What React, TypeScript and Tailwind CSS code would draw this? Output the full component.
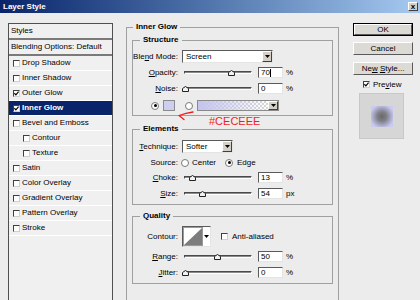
import React from "react";

function Check() {
  return (
    <svg width="5" height="5" viewBox="0 0 5 5">
      <path d="M0.4 2.2 L1.9 3.8 L4.6 0.6" stroke="#000" strokeWidth="1.2" fill="none" />
    </svg>
  );
}

function Checkbox({ checked }: { checked?: boolean }) {
  return (
    <span className="flex items-center justify-center w-[7px] h-[7px] shrink-0 bg-white border border-t-[#404040] border-l-[#404040] border-r-[#d0d0d0] border-b-[#d0d0d0]">
      {checked && <Check />}
    </span>
  );
}

function Radio({ on }: { on?: boolean }) {
  return (
    <span className="flex items-center justify-center w-[8px] h-[8px] shrink-0 rounded-full bg-white border border-[#7a7a7a]">
      {on && <span className="w-[3px] h-[3px] rounded-full bg-black" />}
    </span>
  );
}

function DropBtn() {
  return (
    <span className="flex items-center justify-center w-[10px] h-full shrink-0 bg-[#d4d0c8] border border-t-white border-l-white border-r-[#404040] border-b-[#404040]">
      <svg width="5" height="3" viewBox="0 0 5 3">
        <path d="M0 0 H5 L2.5 3 Z" fill="#000" />
      </svg>
    </span>
  );
}

function Select({ value, className }: { value: string; className: string }) {
  return (
    <div className={`h-[13px] flex items-stretch bg-white border border-t-[#5a5a5a] border-l-[#5a5a5a] border-r-[#e4e4e4] border-b-[#e4e4e4] ${className}`}>
      <span className="flex-1 flex items-center pl-[3px]">{value}</span>
      <DropBtn />
    </div>
  );
}

function Slider({ at }: { at: number }) {
  return (
    <div className="relative w-[72px] h-[11px] flex items-center px-[2px]">
      <div className="w-full h-[3px] bg-[#8a8a8a] border-t border-l border-t-[#4a4a4a] border-l-[#4a4a4a] border-b border-r border-b-white border-r-white" />
      <svg className="absolute top-[3px]" style={{ left: at }} width="7" height="6" viewBox="0 0 7 6">
        <path d="M0.5 5.5 V2.5 L3.5 0.5 L6.5 2.5 V5.5 Z" fill="#f2f2f2" stroke="#222" />
      </svg>
    </div>
  );
}

function Num({ v, caret }: { v: string; caret?: boolean }) {
  return (
    <div className="w-[25px] h-[11px] flex items-center pl-[2px] bg-white border border-t-[#5a5a5a] border-l-[#5a5a5a] border-r-[#e4e4e4] border-b-[#e4e4e4]">
      {v}
      {caret && <span className="w-px h-[8px] bg-black" />}
    </div>
  );
}

function Label({ children }: { children: React.ReactNode }) {
  return <span className="w-[45px] text-right shrink-0">{children}</span>;
}

function SliderRow({ label, at, v, unit, caret, className }: { label: React.ReactNode; at: number; v: string; unit: string; caret?: boolean; className: string }) {
  return (
    <div className={`h-[11px] flex items-center ${className}`}>
      <Label>{label}</Label>
      <span className="ml-[4px]">
        <Slider at={at} />
      </span>
      <span className="ml-[4px]">
        <Num v={v} caret={caret} />
      </span>
      <span className="ml-[3px]">{unit}</span>
    </div>
  );
}

const styles = [
  { label: "Drop Shadow" },
  { label: "Inner Shadow" },
  { label: "Outer Glow", checked: true },
  { label: "Inner Glow", checked: true, selected: true },
  { label: "Bevel and Emboss" },
  { label: "Contour", indent: true },
  { label: "Texture", indent: true },
  { label: "Satin" },
  { label: "Color Overlay" },
  { label: "Gradient Overlay" },
  { label: "Pattern Overlay" },
  { label: "Stroke" },
];

function Button({ children, primary, className }: { children: React.ReactNode; primary?: boolean; className?: string }) {
  return (
    <div className={`h-[13px] ${primary ? "border border-black" : ""} ${className ?? ""}`}>
      <div className="h-full flex items-center justify-center bg-[#dcdad4] border border-t-white border-l-white border-r-[#5a5a5a] border-b-[#5a5a5a]">
        {children}
      </div>
    </div>
  );
}

export default function App() {
  return (
    <div className="relative w-[420px] h-[300px] overflow-hidden bg-[#ececec] text-black text-[8px] leading-[10px] font-['Liberation_Sans',Arial,sans-serif]">
      {/* title bar */}
      <div className="h-[13px] flex items-center justify-between pl-[3px] pr-[2px] bg-linear-to-r from-[#0a246a] to-[#a6caf0]">
        <span className="text-white font-bold">Layer Style</span>
        <span className="w-[10px] h-[9px] flex items-center justify-center bg-[#d4d0c8] border border-t-white border-l-white border-r-[#404040] border-b-[#404040] font-bold leading-none">
          x
        </span>
      </div>

      <div className="flex pl-[8px]">
        {/* styles list */}
        <div className="mt-[10px] w-[105px] h-[290px] shrink-0 bg-[#f0f0f0] border border-[#505050]">
          <div className="h-[16px] flex items-center pl-[2px] border-b-2 border-[#7a7a7a]">Styles</div>
          <div className="h-[16px] flex items-center pl-[2px] border-b-2 border-[#7a7a7a]">Blending Options: Default</div>
          {styles.map((s) => (
            <div
              key={s.label}
              className={`h-[15px] flex items-center gap-[2px] border-b border-white ${s.indent ? "pl-[14px]" : "pl-[4px]"} ${s.selected ? "bg-[#0a246a] text-white font-bold" : ""}`}
            >
              <Checkbox checked={s.checked} />
              <span>{s.label}</span>
            </div>
          ))}
        </div>

        {/* main settings */}
        <fieldset className="ml-[13px] mt-[9px] w-[213px] shrink-0 border border-[#a0a0a0] px-[5px] pt-[3px] pb-[40px]">
          <legend className="ml-[1px] px-[3px] font-bold leading-[10px]">Inner Glow</legend>

          <fieldset className="border border-[#a0a0a0] pt-[5px] pb-[4px]">
            <legend className="ml-[7px] px-[3px] font-bold leading-[10px]">Structure</legend>
            <div className="h-[13px] flex items-center">
              <Label>
                Ble<u>n</u>d Mode:
              </Label>
              <Select value="Screen" className="ml-[4px] w-[91px]" />
            </div>
            <SliderRow className="mt-[4px]" label={<><u>O</u>pacity:</>} at={46} v="70" caret unit="%" />
            <SliderRow className="mt-[5px]" label={<><u>N</u>oise:</>} at={0} v="0" unit="%" />
            <div className="mt-[6px] h-[11px] flex items-center">
              <span className="ml-[18px]">
                <Radio on />
              </span>
              <span className="ml-[4px] w-[12px] h-[11px] bg-[#cecef0] border border-[#8a8a8a]" />
              <span className="ml-[10px]">
                <Radio />
              </span>
              <div className="ml-[4px] w-[82px] h-[11px] flex items-stretch border border-[#8a8a8a] bg-white bg-[repeating-conic-gradient(#d6d6d6_0_25%,#ffffff_0_50%)] bg-[length:4px_4px]">
                <span className="flex-1 bg-linear-to-r from-[#c4c4ee] to-transparent" />
                <DropBtn />
              </div>
            </div>
          </fieldset>

          <fieldset className="mt-[8px] border border-[#a0a0a0] pt-[6px] pb-[5px]">
            <legend className="ml-[7px] px-[3px] font-bold leading-[10px]">Elements</legend>
            <div className="h-[13px] flex items-center">
              <Label>
                <u>T</u>echnique:
              </Label>
              <Select value="Softer" className="ml-[4px] w-[51px]" />
            </div>
            <div className="mt-[4px] h-[11px] flex items-center">
              <Label>Source:</Label>
              <span className="ml-[3px]">
                <Radio />
              </span>
              <span className="ml-[3px]">Center</span>
              <span className="ml-[9px]">
                <Radio on />
              </span>
              <span className="ml-[4px]">Edge</span>
            </div>
            <SliderRow className="mt-[4px]" label={<><u>C</u>hoke:</>} at={7} v="13" unit="%" />
            <SliderRow className="mt-[5px]" label={<><u>S</u>ize:</>} at={17} v="54" unit="px" />
          </fieldset>

          <fieldset className="mt-[6px] border border-[#a0a0a0] pt-[5px] pb-[5px]">
            <legend className="ml-[7px] px-[3px] font-bold leading-[10px]">Quality</legend>
            <div className="h-[21px] flex items-center">
              <Label>Contour:</Label>
              <div className="ml-[4px] w-[29px] h-[21px] flex items-stretch bg-white border border-t-[#5a5a5a] border-l-[#5a5a5a] border-r-[#e4e4e4] border-b-[#e4e4e4]">
                <svg width="20" height="19" viewBox="0 0 20 19" className="shrink-0">
                  <rect x="0.5" y="0.5" width="19" height="18" fill="#fff" stroke="#9a9a9a" />
                  <path d="M1 18 L19 1 L19 18 Z" fill="#7c7c7c" />
                </svg>
                <span className="flex-1 flex items-center justify-center">
                  <svg width="5" height="3" viewBox="0 0 5 3">
                    <path d="M0 0 H5 L2.5 3 Z" fill="#000" />
                  </svg>
                </span>
              </div>
              <span className="ml-[10px]">
                <Checkbox />
              </span>
              <span className="ml-[4px]">Anti-aliased</span>
            </div>
            <SliderRow className="mt-[4px]" label={<><u>R</u>ange:</>} at={32} v="50" unit="%" />
            <SliderRow className="mt-[5px]" label={<><u>J</u>itter:</>} at={0} v="0" unit="%" />
          </fieldset>
        </fieldset>

        {/* buttons */}
        <div className="ml-[14px] mt-[10px] w-[60px] flex flex-col">
          <Button primary>OK</Button>
          <Button className="mt-[6px]">Cancel</Button>
          <Button className="mt-[7px]">
            Ne<u>w</u>&nbsp;<u>S</u>tyle...
          </Button>
          <div className="mt-[5px] h-[9px] flex items-center pl-[10px] gap-[3px]">
            <Checkbox checked />
            <span>
              Pre<u>v</u>iew
            </span>
          </div>
          <div className="mt-[4px] ml-[6px] w-[45px] h-[46px] flex items-center justify-center bg-[#d6d6d6] border border-[#c8c8c8]">
            <div className="w-[22px] h-[21px] bg-[radial-gradient(circle,#6a6a6a_0%,#7e7e86_30%,#a4a4c0_55%,#cacaf0_80%)]" />
          </div>
        </div>
      </div>

      {/* annotation */}
      <svg className="absolute left-[174px] top-[108px]" width="22" height="14" viewBox="0 0 22 14">
        <path d="M19 4 Q12 5 5 7.5 L10 11.5" stroke="#ee1c1c" strokeWidth="1.3" fill="none" strokeLinecap="round" strokeLinejoin="round" />
      </svg>
      <span className="absolute left-[209px] top-[116px] text-[11px] leading-[11px] text-[#f01e1e]">#CECEEE</span>
    </div>
  );
}
